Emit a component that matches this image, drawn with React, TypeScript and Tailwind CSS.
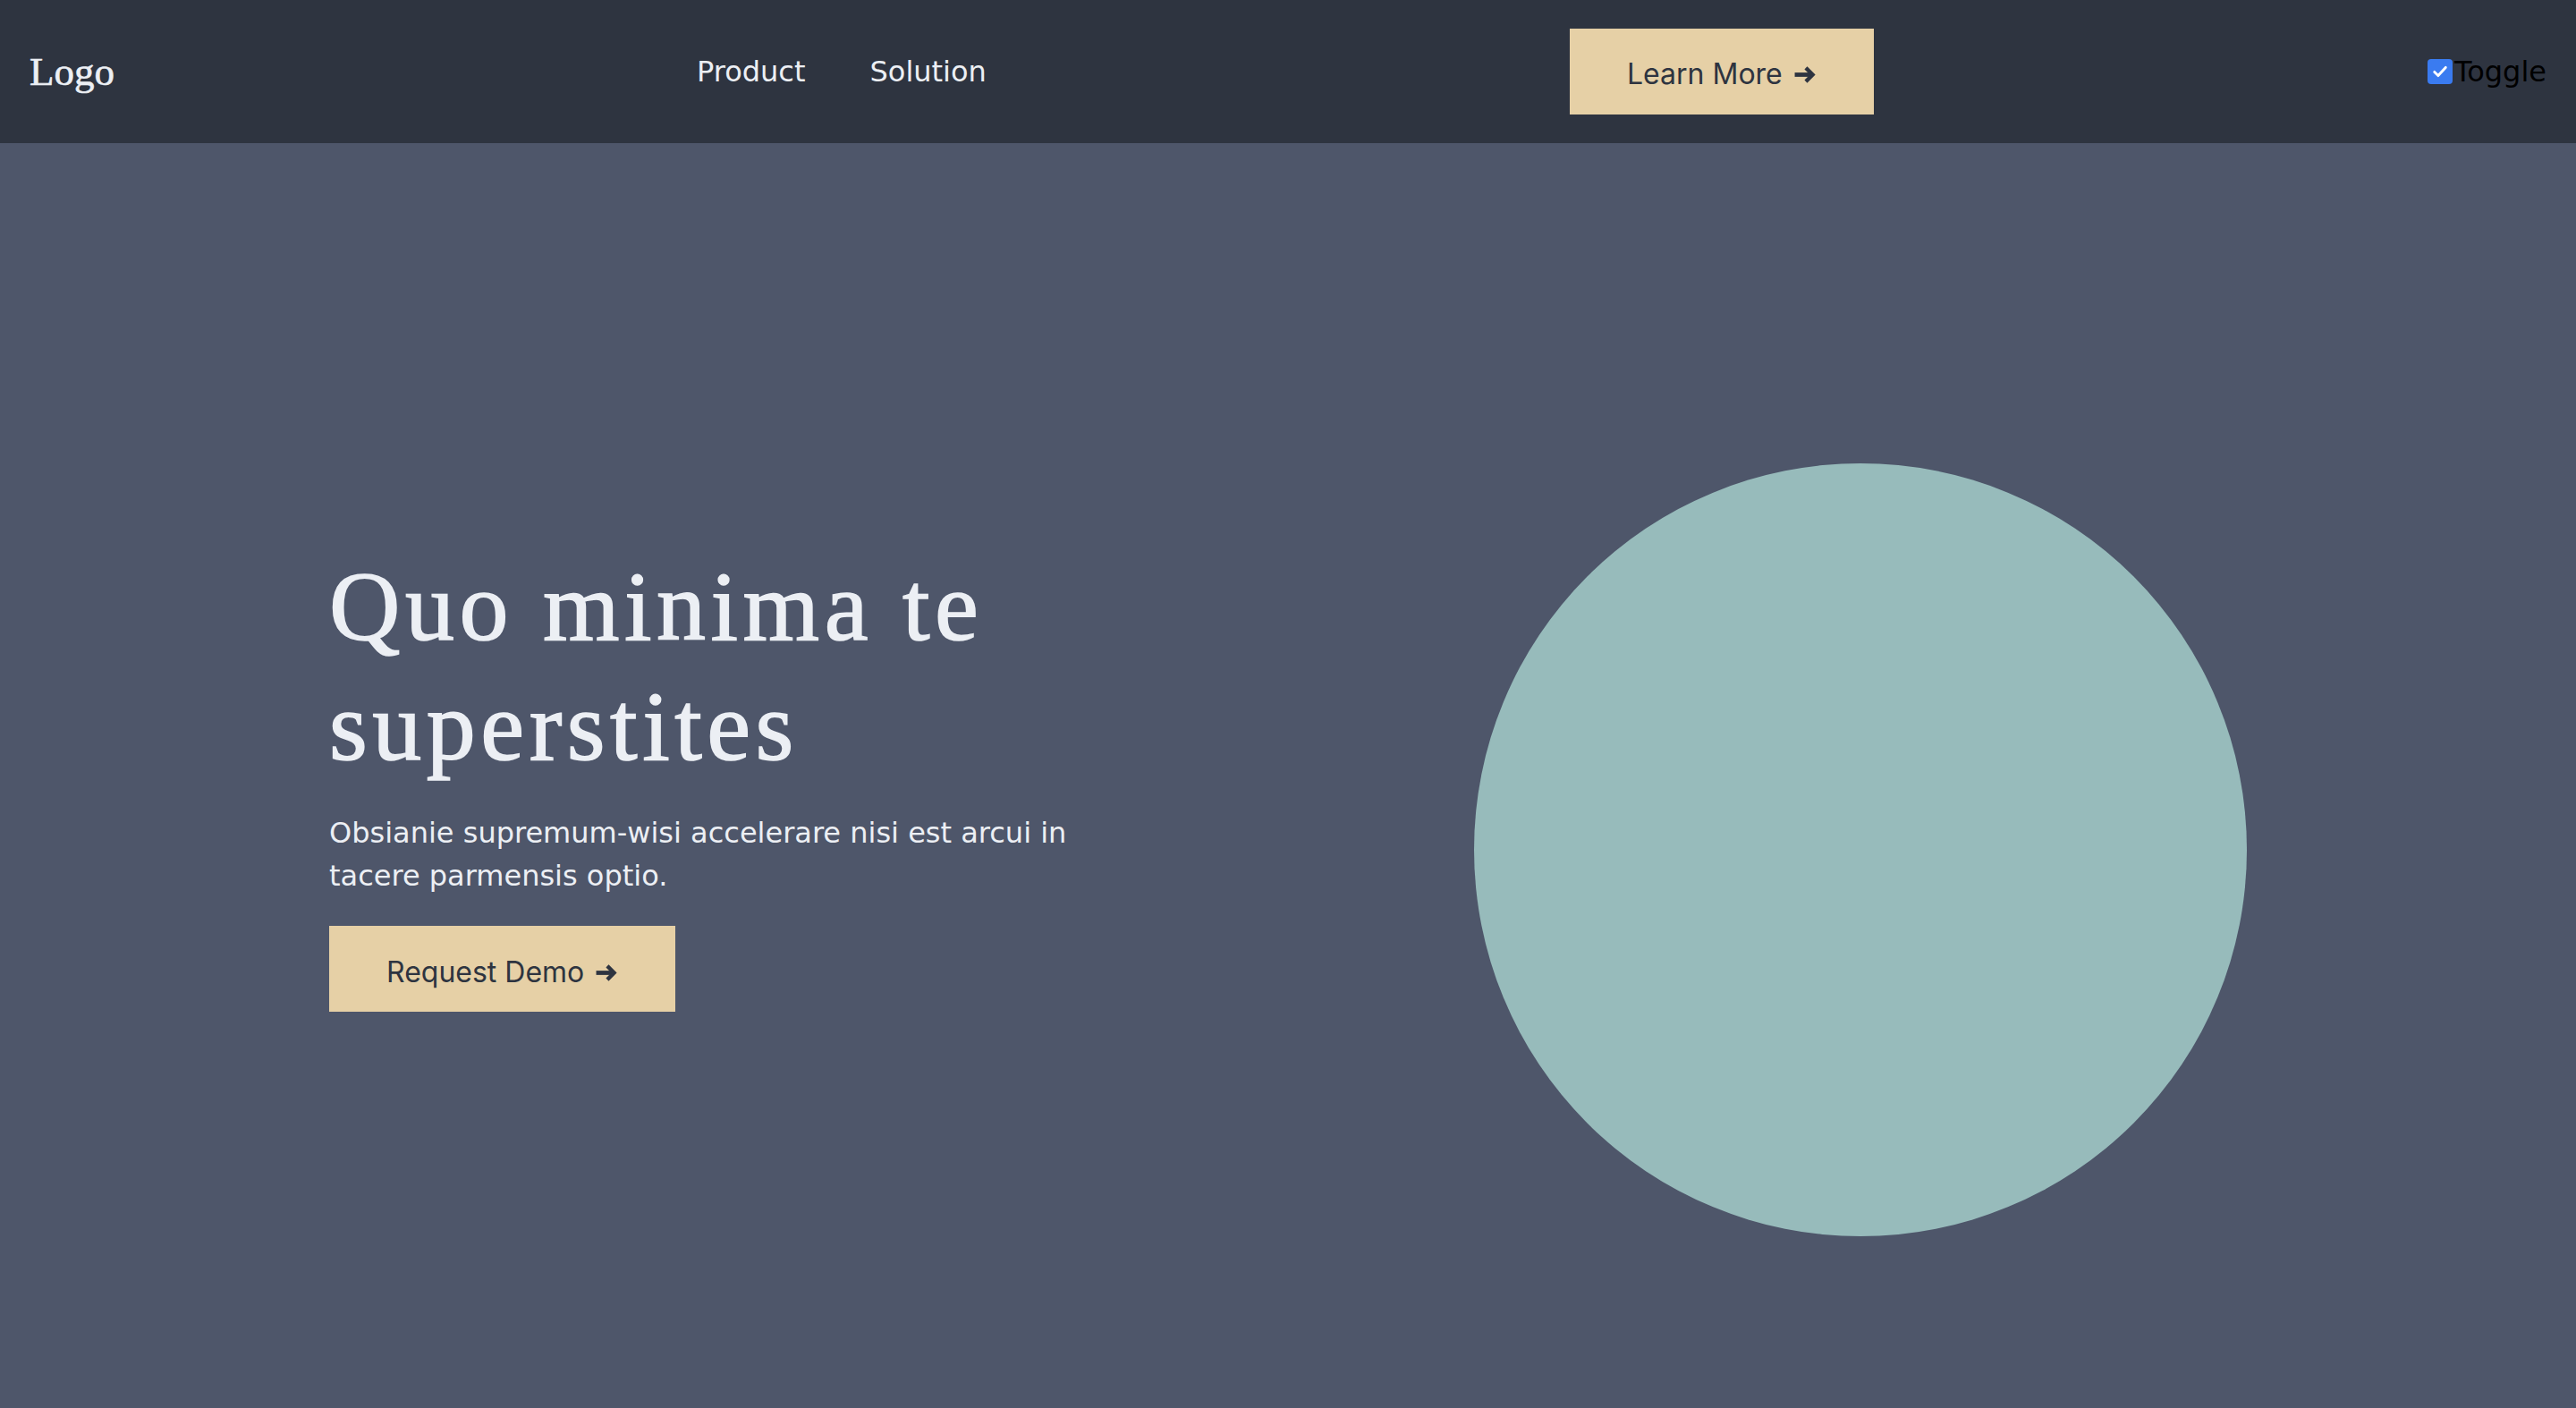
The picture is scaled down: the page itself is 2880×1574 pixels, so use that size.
import React from 'react';

const CheckMark = () => (
  <svg viewBox="0 0 24 24" className="h-[20px] w-[20px]" fill="none">
    <path d="M4.5 12.5l5 5 10-11" stroke="white" strokeWidth="3.5" strokeLinecap="round" strokeLinejoin="round" />
  </svg>
);

const Arrow = () => (
  <svg viewBox="0 0 26 22" className="ml-[12px] inline-block h-[21px] w-[26px] align-[-1px]" fill="none">
    <path d="M1 11h20" stroke="#2e3440" strokeWidth="5" />
    <path d="M14 3l8 8-8 8" stroke="#2e3440" strokeWidth="4.5" strokeLinejoin="miter" />
  </svg>
);

const App: React.FC = () => {
  return (
    <div className="min-h-screen bg-[#4e566a] font-['DejaVu_Sans',sans-serif]">
      {/* Header */}
      <header className="flex h-[160px] items-center bg-[#2e3440] px-[33px]">
        <div className="w-[746px] shrink-0">
          <a href="#" className="font-['Liberation_Serif',serif] text-[45px] leading-none text-[#eceff4] [-webkit-text-stroke:0.6px_#eceff4]">
            Logo
          </a>
        </div>
        <nav className="flex w-[976px] shrink-0 items-center gap-[72px] text-[32px] leading-[48px] text-[#eceff4]">
          <a href="#">Product</a>
          <a href="#">Solution</a>
        </nav>
        <button className="flex items-center bg-[#e6d0a6] px-16 pt-[27px] pb-[21px] font-['Inter',sans-serif] text-[32px] leading-[48px] text-[#2e3440]">
          Learn More
          <Arrow />
        </button>
        <label className="ml-auto flex items-center text-[32px] leading-[48px] text-black">
          <span className="mr-[2px] flex h-[28px] w-[28px] items-center justify-center rounded-[4px] bg-[#3a7bf0]">
            <CheckMark />
          </span>
          Toggle
        </label>
      </header>

      {/* Hero */}
      <section className="grid min-h-[1574px] grid-cols-2 items-center px-[368px]">
        <div className="pb-[152px]">
          <h1 className="max-w-[880px] font-['Liberation_Serif',serif] text-[110px] leading-[134px] tracking-[5.5px] text-[#eceff4] [-webkit-text-stroke:1.5px_#eceff4]">
            Quo minima te superstites
          </h1>
          <p className="mt-7 max-w-[880px] text-[32px] leading-[48px] text-[#eceff4]">
            Obsianie supremum-wisi accelerare nisi est arcui in tacere parmensis optio.
          </p>
          <button className="mt-8 flex items-center bg-[#e6d0a6] px-16 pt-[28px] pb-[20px] font-['Inter',sans-serif] text-[32px] leading-[48px] text-[#2e3440]">
            Request Demo
            <Arrow />
          </button>
        </div>
        <div className="flex justify-end pt-[6px]">
          <div className="h-[864px] w-[864px] rounded-full bg-[#97bbbb]" />
        </div>
      </section>
    </div>
  );
};

export default App;
